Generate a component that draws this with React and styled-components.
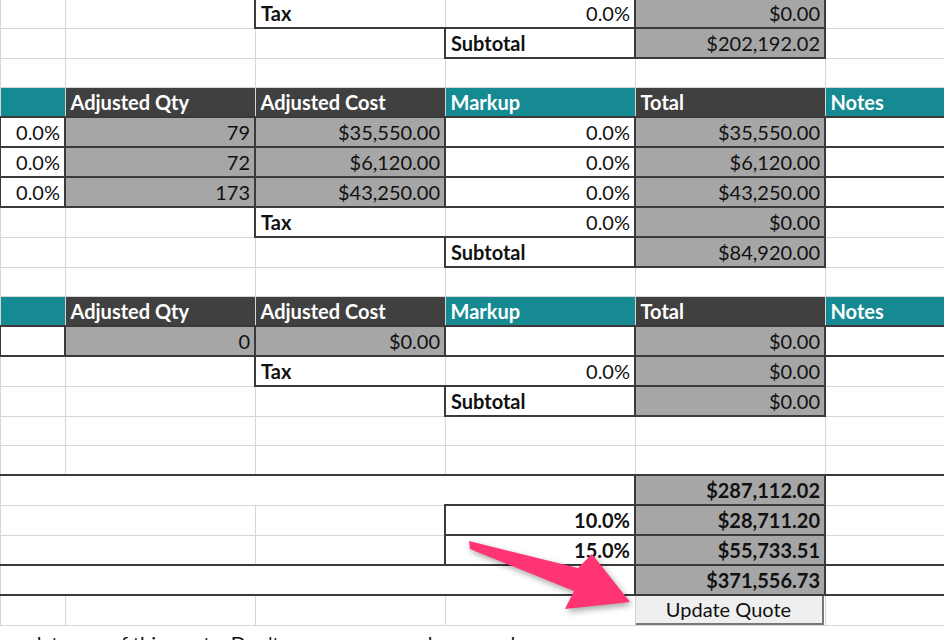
import React from "react";
import styled, { createGlobalStyle } from "styled-components";

const Global = createGlobalStyle`
  html, body { margin: 0; padding: 0; background: #fff; overflow: hidden; }
  body { font-family: "Lato", "Open Sans", sans-serif; }
`;

const Page = styled.div`
  position: relative;
  width: 944px;
  height: 640px;
  overflow: hidden;
`;

const Sheet = styled.table`
  border-collapse: collapse;
  table-layout: fixed;
  width: 946px;
  margin-top: -3px;
  margin-left: -1px;
`;

const DARK = "2px solid #3a3a3a";
const LIGHT = "1px solid #d6d6d6";

const Cell = styled.td`
  height: 28px;
  padding: 0 4px 0 5px;
  font-size: 20px;
  line-height: 28px;
  white-space: nowrap;
  overflow: hidden;
  color: ${(p) => (p.$bg === "dark" || p.$bg === "teal" ? "#fff" : "#111")};
  font-weight: ${(p) => (p.$bold || p.$bg === "dark" || p.$bg === "teal" ? 700 : 400)};
  text-align: ${(p) => p.$align || "left"};
  background: ${(p) =>
    p.$bg === "gray" ? "#a6a6a6" : p.$bg === "dark" ? "#404040" : p.$bg === "teal" ? "#168a93" : "#fff"};
  border-top: ${(p) => (p.$bt ? DARK : LIGHT)};
  border-bottom: ${(p) => (p.$bb ? DARK : LIGHT)};
  border-left: ${(p) => (p.$bl ? DARK : LIGHT)};
  border-right: ${(p) => (p.$br ? DARK : LIGHT)};
`;

const ButtonCell = styled.td`
  height: 28px;
  padding: 0;
  border: ${LIGHT};
  border-top: ${DARK};
`;

const QuoteButton = styled.div`
  height: 27px;
  margin: 0 1px 0 0;
  background: #efefef;
  border-right: 2px solid #777;
  border-bottom: 2px solid #777;
  font-size: 20px;
  line-height: 26px;
  text-align: center;
  color: #111;
`;

const Note = styled.div`
  position: absolute;
  left: 8px;
  top: 631px;
  font-size: 20px;
  color: #111;
  white-space: nowrap;
`;

const Arrow = styled.svg`
  position: absolute;
  left: 0;
  top: 0;
  pointer-events: none;
  filter: drop-shadow(2px 3px 3px rgba(0,0,0,0.35));
`;

const W = [65, 190, 190, 190, 190, 121];

const g = (t, o = {}) => ({ t, bg: "gray", align: "right", all: true, ...o });
const e = (o = {}) => ({ t: "", ...o });

const taxRow = (val) => [
  e(), e(),
  { t: "Tax", bold: true, bl: true, bb: true },
  { t: "0.0%", align: "right", bb: true },
  g(val), e({ bl: true }),
];
const subRow = (val) => [
  e(), e(), e({ bt: true }),
  { t: "Subtotal", bold: true, bl: true, bb: true },
  g(val), e({ bl: true }),
];
const header = () => [
  { t: "", bg: "teal", bb: true },
  { t: "Adjusted Qty", bg: "dark", bb: true },
  { t: "Adjusted Cost", bg: "dark", bb: true },
  { t: "Markup", bg: "teal", bb: true },
  { t: "Total", bg: "dark", bb: true },
  { t: "Notes", bg: "teal", bb: true },
];
const item = (a, q, c, t) => [
  { t: a, align: "right", all: true },
  g(q), g(c),
  { t: a ? "0.0%" : "", align: "right", all: true },
  g(t),
  { t: "", all: true },
];
const blank = () => [e(), e(), e(), e(), e(), e()];

const rows = [
  taxRow("$0.00"),
  subRow("$202,192.02"),
  blank(),
  header(),
  item("0.0%", "79", "$35,550.00", "$35,550.00"),
  item("0.0%", "72", "$6,120.00", "$6,120.00"),
  item("0.0%", "173", "$43,250.00", "$43,250.00"),
  taxRow("$0.00"),
  subRow("$84,920.00"),
  blank(),
  header(),
  item("", "0", "$0.00", "$0.00"),
  taxRow("$0.00"),
  subRow("$0.00"),
  blank(),
  blank(),
];

const fill = (cells) => cells.map((c) =>
  c.all ? { ...c, bt: true, bb: true, bl: true, br: true } : c
);

export default function App() {
  return (
    <Page>
      <Global />
      <Sheet>
        <colgroup>
          {W.map((w, i) => <col key={i} style={{ width: w }} />)}
        </colgroup>
        <tbody>
          {rows.map((r, i) => (
            <tr key={i}>
              {fill(r).map((c, j) => (
                <Cell key={j} $bg={c.bg} $align={c.align} $bold={c.bold}
                  $bt={c.bt} $bb={c.bb} $bl={c.bl} $br={c.br}>{c.t}</Cell>
              ))}
            </tr>
          ))}
          <tr>
            <Cell colSpan={4} $bt />
            <Cell $bg="gray" $align="right" $bold $bt $bb $bl $br>$287,112.02</Cell>
            <Cell $bt />
          </tr>
          <tr>
            <Cell colSpan={2} />
            <Cell />
            <Cell $align="right" $bold $bl $bt $bb>10.0%</Cell>
            <Cell $bg="gray" $align="right" $bold $bt $bb $bl $br>$28,711.20</Cell>
            <Cell />
          </tr>
          <tr>
            <Cell colSpan={2} />
            <Cell />
            <Cell $align="right" $bold $bl $bt $bb>15.0%</Cell>
            <Cell $bg="gray" $align="right" $bold $bt $bb $bl $br>$55,733.51</Cell>
            <Cell />
          </tr>
          <tr>
            <Cell colSpan={4} $bt $bb />
            <Cell $bg="gray" $align="right" $bold $bt $bb $bl $br>$371,556.73</Cell>
            <Cell $bt $bb />
          </tr>
          <tr>
            <Cell />
            <Cell />
            <Cell />
            <Cell />
            <ButtonCell><QuoteButton>Update Quote</QuoteButton></ButtonCell>
            <Cell />
          </tr>
        </tbody>
      </Sheet>
      <Note>update any of this quote. Don't worry, you can always undo.</Note>
      <Arrow width="944" height="640" viewBox="0 0 944 640">
        <polygon
          fill="#ff3573"
          points="469,541 578,568 592,554 630,602 565,609 574,591 470,549"
          strokeLinejoin="round"
        />
      </Arrow>
    </Page>
  );
}
